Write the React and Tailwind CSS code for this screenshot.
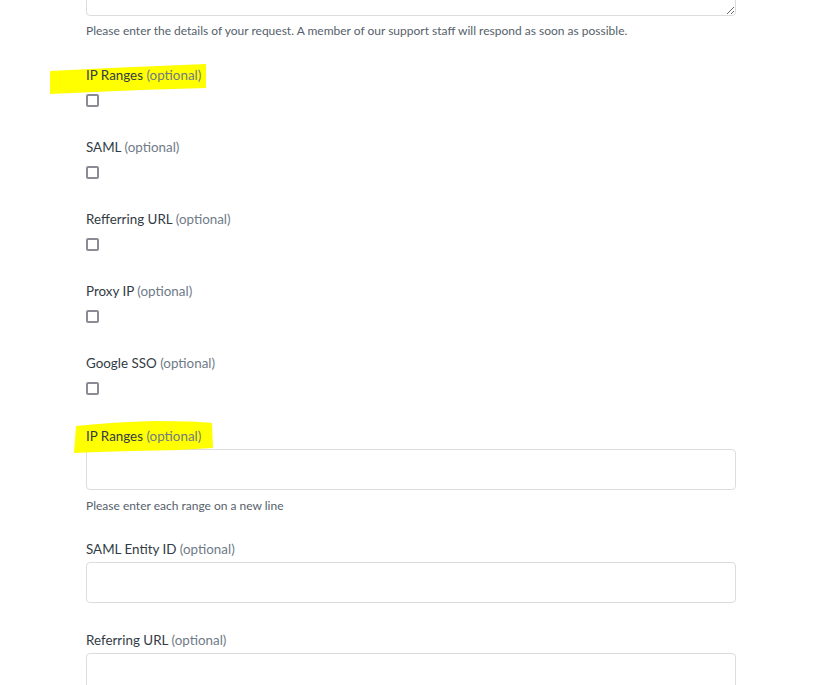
import React from 'react';

const checkFields = ["SAML", "Refferring URL", "Proxy IP", "Google SSO"];

function Label({ text, mark, className = "" }) {
  return (
    <div className={`relative text-[13.4px] leading-[18px] ${className}`}>
      {mark === 1 && (
        <svg className="absolute left-[-36px] top-[-4px] w-[157px] h-[32px]" viewBox="0 0 157 32">
          <path d="M0 9 L60 6 L156 2 L156 26 L90 28 L0 32 Z" fill="#ffff00" />
        </svg>
      )}
      {mark === 2 && (
        <svg className="absolute left-[-12px] top-[-7px] w-[140px] h-[34px]" viewBox="0 0 140 34">
          <path d="M2 6 Q40 2 80 1 Q120 1 138 3 L139 28 Q100 31 60 31 Q20 32 0 33 Z" fill="#ffff00" />
        </svg>
      )}
      <span className="relative text-[#333b44]">{text}</span>{" "}
      <span className="relative text-[#6f7b87]">(optional)</span>
    </div>
  );
}

function Box() {
  return <div className="w-[13px] h-[13px] border-2 border-[#8b8b96] rounded-[2px] bg-white" />;
}

function TextInput() {
  return <input type="text" className="block w-full h-[41px] border border-[#dcdcdc] rounded-[4px] bg-white outline-none" />;
}

export default function App() {
  return (
    <div className="w-[834px] h-[685px] overflow-hidden bg-white" style={{ fontFamily: "Lato, 'Open Sans', sans-serif" }}>
      <div className="ml-[86px] w-[650px]">
        <textarea className="block w-full h-[100px] -mt-[84px] border border-[#dcdcdc] rounded-[4px] bg-white outline-none" />
        <p className="mt-[6px] text-[12px] leading-[17px] text-[#56616b]">
          Please enter the details of your request. A member of our support staff will respond as soon as possible.
        </p>

        <Label text="IP Ranges" mark={1} className="mt-[27px]" />
        <div className="mt-[10px]"><Box /></div>

        {checkFields.map((name) => (
          <div key={name}>
            <Label text={name} className="mt-[31px]" />
            <div className="mt-[10px]"><Box /></div>
          </div>
        ))}

        <Label text="IP Ranges" mark={2} className="mt-[32px]" />
        <div className="mt-[4px]"><TextInput /></div>
        <p className="mt-[7px] text-[12px] leading-[17px] text-[#56616b]">Please enter each range on a new line</p>

        <Label text="SAML Entity ID" className="mt-[26px]" />
        <div className="mt-[4px]"><TextInput /></div>

        <Label text="Referring URL" className="mt-[28px]" />
        <div className="mt-[4px]"><TextInput /></div>
      </div>
    </div>
  );
}
